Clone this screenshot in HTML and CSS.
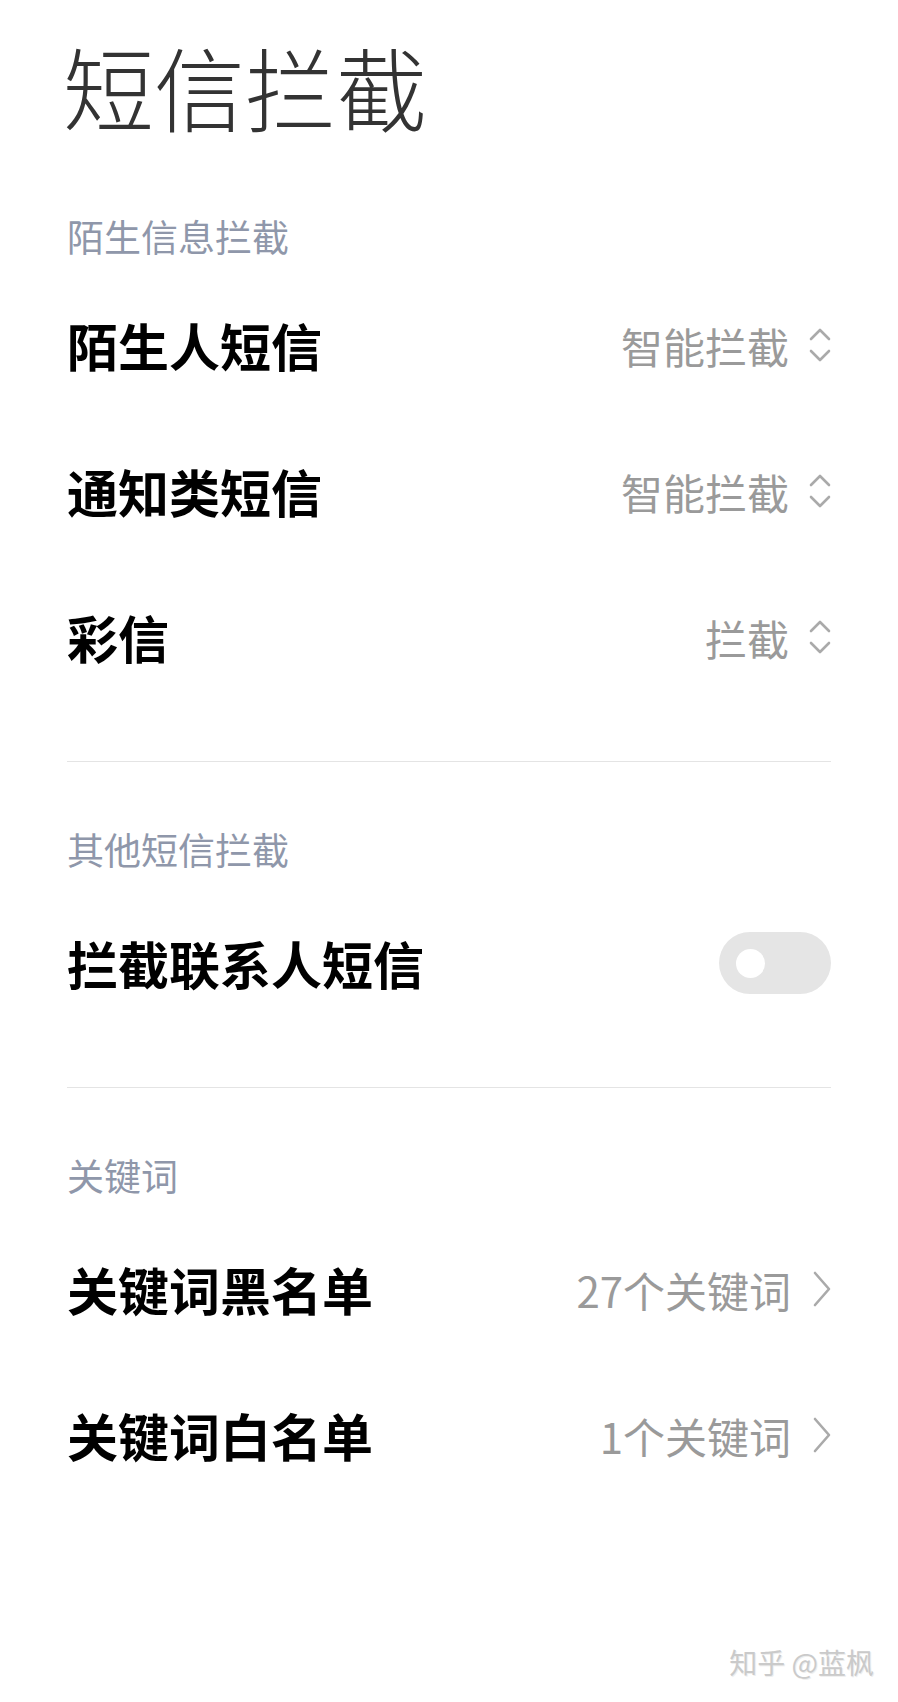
FILE: index.html
```html
<!DOCTYPE html>
<html lang="zh-CN">
<head>
<meta charset="utf-8">
<title>短信拦截</title>
<link rel="stylesheet" href="styles.css">
</head>
<body>
<main class="page">
  <h1 class="title">短信拦截</h1>

  <section class="group">
    <div class="group-header">陌生信息拦截</div>
    <div class="row">
      <span class="label">陌生人短信</span>
      <span class="value">智能拦截
        <svg class="updown" viewBox="0 0 22 34" width="22" height="34"><path d="M2 11 L11 2 L20 11" /><path d="M2 23 L11 32 L20 23" /></svg>
      </span>
    </div>
    <div class="row">
      <span class="label">通知类短信</span>
      <span class="value">智能拦截
        <svg class="updown" viewBox="0 0 22 34" width="22" height="34"><path d="M2 11 L11 2 L20 11" /><path d="M2 23 L11 32 L20 23" /></svg>
      </span>
    </div>
    <div class="row">
      <span class="label">彩信</span>
      <span class="value">拦截
        <svg class="updown" viewBox="0 0 22 34" width="22" height="34"><path d="M2 11 L11 2 L20 11" /><path d="M2 23 L11 32 L20 23" /></svg>
      </span>
    </div>
  </section>

  <hr class="divider">

  <section class="group">
    <div class="group-header">其他短信拦截</div>
    <div class="row">
      <span class="label">拦截联系人短信</span>
      <span class="toggle"><span class="knob"></span></span>
    </div>
  </section>

  <hr class="divider">

  <section class="group">
    <div class="group-header">关键词</div>
    <div class="row">
      <span class="label">关键词黑名单</span>
      <span class="value">27个关键词
        <svg class="chev" viewBox="0 0 18 36" width="18" height="36"><path d="M2 2 L16 18 L2 34" /></svg>
      </span>
    </div>
    <div class="row">
      <span class="label">关键词白名单</span>
      <span class="value">1个关键词
        <svg class="chev" viewBox="0 0 18 36" width="18" height="36"><path d="M2 2 L16 18 L2 34" /></svg>
      </span>
    </div>
  </section>

  <div class="watermark">知乎 @蓝枫</div>
</main>
</body>
</html>
```

FILE: styles.css
```css
html, body {
  margin: 0;
  padding: 0;
  background: #ffffff;
}

body {
  font-family: "Noto Sans CJK SC", "Noto Sans", sans-serif;
  width: 898px;
  height: 1702px;
  overflow: hidden;
}

.page {
  position: relative;
  height: 1702px;
  padding: 31px 67px 0 67px;
  box-sizing: border-box;
}

.title {
  margin: 0 0 72px -4px;
  font-size: 91px;
  line-height: 108px;
  font-weight: 300;
  color: #333333;
  letter-spacing: 0;
}

.group {
  display: flex;
  flex-direction: column;
}

.group-header {
  font-size: 37px;
  line-height: 50px;
  color: #8f97aa;
  margin-bottom: 11px;
}

.divider + .group .group-header {
  margin-bottom: 16px;
}

.row {
  height: 146px;
  display: flex;
  align-items: center;
  justify-content: space-between;
}

.label {
  font-size: 51px;
  font-weight: 700;
  color: #000000;
}

.value {
  display: flex;
  align-items: center;
  gap: 20px;
  font-size: 42px;
  color: #9a9a9a;
}

.updown, .chev {
  fill: none;
  stroke: #aaaaaa;
  stroke-width: 2.6;
  stroke-linecap: round;
  stroke-linejoin: round;
}

.chev {
  margin-left: 2px;
}

.toggle {
  width: 112px;
  height: 62px;
  border-radius: 31px;
  background: #e5e5e5;
  display: flex;
  align-items: center;
  padding-left: 17px;
  box-sizing: border-box;
}

.knob {
  width: 29px;
  height: 29px;
  border-radius: 50%;
  background: #ffffff;
}

.divider {
  border: 0;
  height: 1px;
  background: #e4e4e4;
  margin: 51px 0 62px 0;
}

.watermark {
  position: absolute;
  right: 24px;
  bottom: 20px;
  font-size: 28px;
  line-height: 40px;
  color: #cacaca;
  text-shadow: 1px 1px 0 #eeeeee;
}
```
